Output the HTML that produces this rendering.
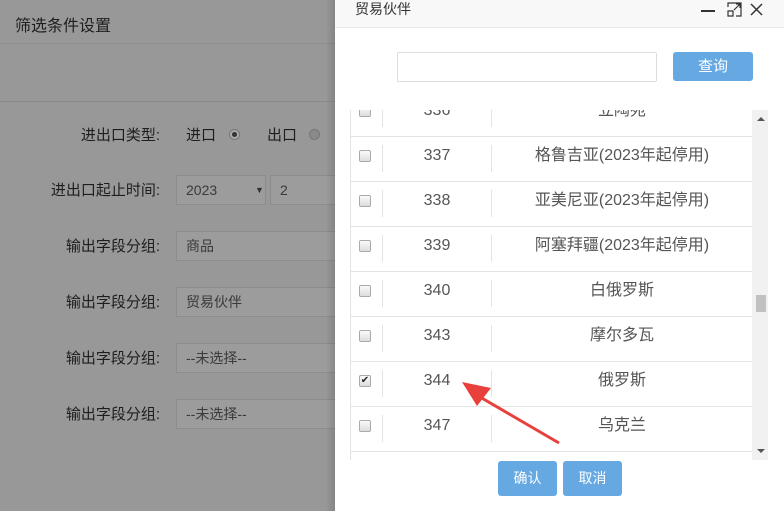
<!DOCTYPE html>
<html><head><meta charset="utf-8"><style>
*{margin:0;padding:0;box-sizing:border-box}
html,body{width:784px;height:511px;overflow:hidden}
body{position:relative;background:#989898;font-family:"Liberation Sans","Noto Sans CJK SC",sans-serif;font-size:15px;color:#1e1e1e}
.a{position:absolute}
.lbl{position:absolute;right:624px;width:200px;text-align:right;line-height:20px}
.inp{position:absolute;left:176px;width:170px;height:30px;border:1px solid #8c8c8c;background:#9c9c9c;padding-left:9px;line-height:28px;color:#3a3a3a;font-size:14px}
.dlg{position:absolute;left:335px;top:0;width:449px;height:511px;background:#fff}
.row{position:absolute;left:351px;width:401px;height:45px;border-bottom:1px solid #e3e3e3;font-size:16px;color:#555;line-height:44px}
.row .cb{position:absolute;left:8px;top:13px;width:12px;height:12px;border:1px solid #aaa;border-radius:2px;background:linear-gradient(#fafafa,#ddd);line-height:10px}
.row .d1{position:absolute;left:31px;top:8px;height:27px;border-left:1px solid #e3e3e3}
.row .d2{position:absolute;left:140px;top:8px;height:27px;border-left:1px solid #e3e3e3}
.row .n{position:absolute;left:32px;width:108px;text-align:center;top:-3px}
.row .t{position:absolute;left:141px;width:260px;text-align:center;top:-3px}
.btn{position:absolute;background:#65a8e2;color:#fff;border-radius:3px;text-align:center;font-size:14px}
</style></head><body>
<div class="a" style="left:0;top:0;width:335px;height:44px;border-bottom:1px solid #8e8e8e"></div>
<div class="a" style="left:15px;top:12px;font-size:16px">筛选条件设置</div>
<div class="a" style="left:0;top:101px;width:335px;border-top:1px solid #8a8a8a"></div>
<div class="lbl" style="top:126px">进出口类型:</div>
<div class="a" style="left:186px;top:126px;line-height:20px">进口</div>
<div class="a" style="left:229px;top:129px;width:11px;height:11px;border-radius:50%;border:1px solid #777;background:#aaa"><div style="width:5px;height:5px;margin:2px;border-radius:50%;background:#333"></div></div>
<div class="a" style="left:267px;top:126px;line-height:20px">出口</div>
<div class="a" style="left:309px;top:129px;width:11px;height:11px;border-radius:50%;border:1px solid #777;background:#8a8a8a"></div>
<div class="lbl" style="top:181px">进出口起止时间:</div>
<div class="inp" style="top:175px;width:90px">2023<span style="position:absolute;left:78px;font-size:9px;color:#333">▼</span></div>
<div class="inp" style="top:175px;left:270px;width:70px">2</div>
<div class="lbl" style="top:237px">输出字段分组:</div>
<div class="inp" style="top:231px">商品</div>
<div class="lbl" style="top:293px">输出字段分组:</div>
<div class="inp" style="top:287px">贸易伙伴</div>
<div class="lbl" style="top:349px">输出字段分组:</div>
<div class="inp" style="top:343px">--未选择--</div>
<div class="lbl" style="top:405px">输出字段分组:</div>
<div class="inp" style="top:399px">--未选择--</div>
<div class="a" style="left:325px;top:0;width:10px;height:511px;background:linear-gradient(90deg,rgba(0,0,0,0),rgba(0,0,0,.12))"></div>

<div class="dlg">
<div class="a" style="left:0;top:0;width:449px;height:28px;background:#f8f8f8;border-bottom:1px solid #e8e8e8"></div>
<div class="a" style="left:20px;top:-1px;font-size:14px;color:#333">贸易伙伴</div>
<div class="a" style="left:366px;top:10px;width:14px;height:2px;background:#333"></div>
<svg class="a" style="left:392px;top:2px" width="15" height="15" viewBox="0 0 15 15" fill="none" stroke="#333" stroke-width="1.2"><path d="M1 5V1h13v13H9M1 9h5v5H1z M7 8l6-6M9 2h4v4"/></svg>
<svg class="a" style="left:415px;top:3px" width="13" height="13" viewBox="0 0 13 13" stroke="#333" stroke-width="1.5"><path d="M1 1l11 11M12 1L1 12"/></svg>
<div class="a" style="left:62px;top:52px;width:260px;height:30px;border:1px solid #ddd;border-radius:2px"></div>
<div class="btn" style="left:338px;top:52px;width:80px;height:29px;line-height:29px;font-size:15px">查询</div>
</div>
<div class="a" style="left:350px;top:110px;width:418px;height:350px;overflow:hidden">
<div style="position:absolute;left:-350px;top:-110px;width:784px;height:560px">
<div class="row" style="top:92px"><div class="cb"></div><div class="d1"></div><div class="d2"></div><div class="n">336</div><div class="t">立陶宛</div></div>
<div class="row" style="top:137px"><div class="cb"></div><div class="d1"></div><div class="d2"></div><div class="n">337</div><div class="t">格鲁吉亚(2023年起停用)</div></div>
<div class="row" style="top:182px"><div class="cb"></div><div class="d1"></div><div class="d2"></div><div class="n">338</div><div class="t">亚美尼亚(2023年起停用)</div></div>
<div class="row" style="top:227px"><div class="cb"></div><div class="d1"></div><div class="d2"></div><div class="n">339</div><div class="t">阿塞拜疆(2023年起停用)</div></div>
<div class="row" style="top:272px"><div class="cb"></div><div class="d1"></div><div class="d2"></div><div class="n">340</div><div class="t">白俄罗斯</div></div>
<div class="row" style="top:317px"><div class="cb"></div><div class="d1"></div><div class="d2"></div><div class="n">343</div><div class="t">摩尔多瓦</div></div>
<div class="row" style="top:362px"><div class="cb" style="font-size:10px;text-align:center;color:#222">✔</div><div class="d1"></div><div class="d2"></div><div class="n">344</div><div class="t">俄罗斯</div></div>
<div class="row" style="top:407px"><div class="cb"></div><div class="d1"></div><div class="d2"></div><div class="n">347</div><div class="t">乌克兰</div></div>
<div class="row" style="top:452px"><div class="cb"></div><div class="d1"></div><div class="d2"></div></div>
<div class="a" style="left:350px;top:92px;height:370px;border-left:1px solid #e3e3e3"></div>
<div class="a" style="left:752px;top:92px;width:16px;height:370px;background:#f1f1f1"></div>
<div class="a" style="left:756px;top:295px;width:10px;height:17px;background:#c1c1c1"></div>
<div class="a" style="left:757px;top:117px;width:0;height:0;border:4px solid transparent;border-bottom-color:#555;border-top:0"></div>
<div class="a" style="left:757px;top:449px;width:0;height:0;border:4px solid transparent;border-top-color:#555;border-bottom:0"></div>
</div></div>
<div class="btn" style="left:498px;top:461px;width:59px;height:35px;line-height:35px">确认</div>
<div class="btn" style="left:563px;top:461px;width:59px;height:35px;line-height:35px">取消</div>
<svg class="a" style="left:455px;top:375px" width="110" height="75" viewBox="0 0 110 75"><path d="M104 68 L25 22" stroke="#e8413c" stroke-width="3" fill="none"/><path d="M7 7 L36 13 L22 31 Z" fill="#e8413c"/></svg>
</body></html>
